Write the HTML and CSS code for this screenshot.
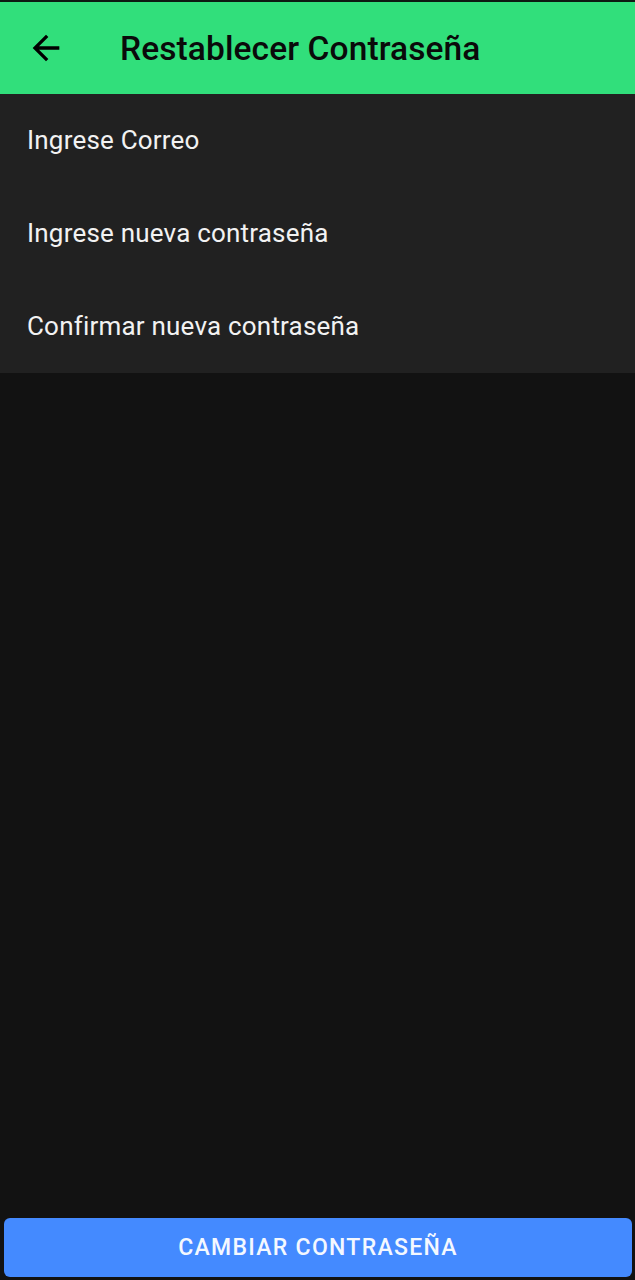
FILE: index.html
```html
<!DOCTYPE html>
<html lang="es">
<head>
<meta charset="utf-8">
<title>Restablecer Contraseña</title>
<link rel="stylesheet" href="styles.css">
</head>
<body>
<div class="screen">
  <header class="appbar">
    <button class="back" aria-label="Atrás">
      <svg viewBox="0 0 24 24" width="40" height="40"><path d="M20 11H7.83l5.59-5.59L12 4l-8 8 8 8 1.41-1.41L7.83 13H20v-2z" fill="#000"/></svg>
    </button>
    <h1 class="title">Restablecer Contraseña</h1>
  </header>
  <section class="form">
    <div class="field">Ingrese Correo</div>
    <div class="field">Ingrese nueva contraseña</div>
    <div class="field">Confirmar nueva contraseña</div>
  </section>
  <div class="spacer"></div>
  <div class="actions">
    <button class="submit">CAMBIAR CONTRASEÑA</button>
  </div>
</div>
</body>
</html>
```
FILE: styles.css
```css
* { box-sizing: border-box; }
html, body { margin: 0; padding: 0; }
body {
  background: #121212;
  font-family: Roboto, "Noto Sans", sans-serif;
  width: 635px;
  height: 1280px;
  overflow: hidden;
}
.screen {
  display: flex;
  flex-direction: column;
  height: 1280px;
  border-top: 2px solid #0d1a12;
}
.appbar {
  height: 92px;
  background: #31df7b;
  display: flex;
  align-items: center;
  padding-left: 26px;
  gap: 54px;
}
.back {
  background: none;
  border: 0;
  padding: 0;
  width: 40px;
  height: 40px;
  display: flex;
}
.title {
  margin: 0;
  font-size: 33.5px;
  font-weight: 500;
  color: #0a0a0a;
  letter-spacing: 0.1px;
}
.form {
  background: #212121;
  display: flex;
  flex-direction: column;
}
.field {
  height: 93px;
  display: flex;
  align-items: center;
  padding-left: 27px;
  padding-bottom: 2px;
  font-size: 26px;
  color: #f2f2f2;
  letter-spacing: 0.2px;
}
.spacer { flex: 1; }
.actions {
  padding: 0 3px 3px 4px;
}
.submit {
  width: 100%;
  height: 59px;
  background: #448aff;
  border: 0;
  border-radius: 6px;
  color: #f4f8ff;
  font-family: Roboto, "Noto Sans", sans-serif;
  font-size: 23px;
  font-weight: 500;
  letter-spacing: 1.3px;
}
```
